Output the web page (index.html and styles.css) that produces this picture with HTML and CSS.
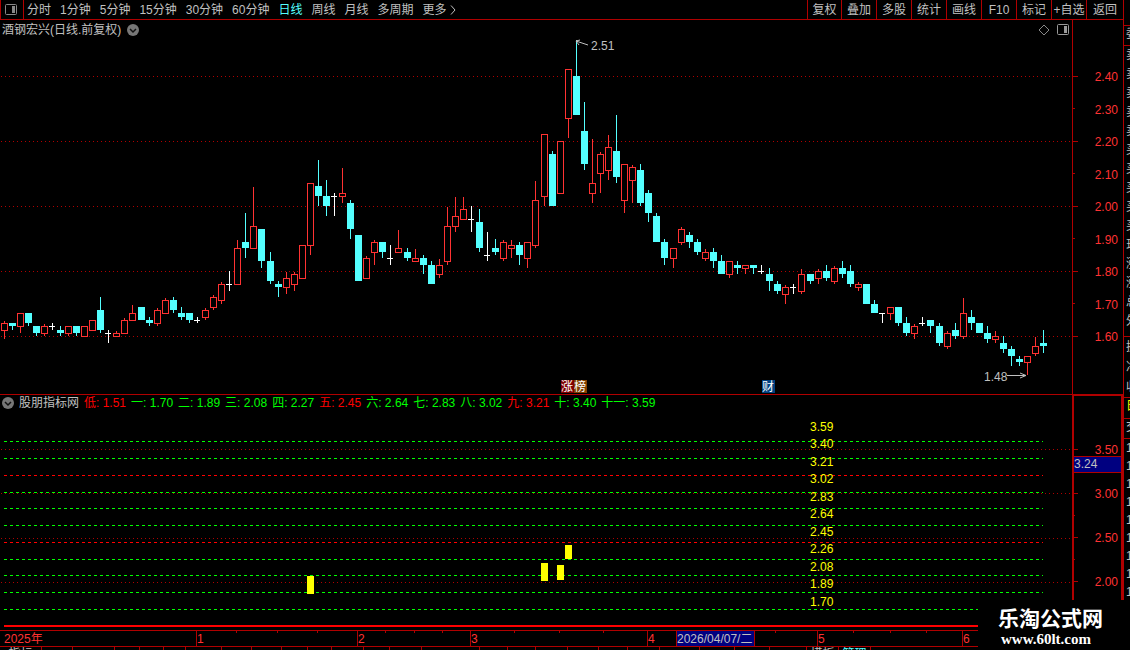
FILE: index.html
```html
<!DOCTYPE html>
<html lang="zh-CN">
<head>
    <meta charset="UTF-8">
    <meta name="viewport" content="width=device-width, initial-scale=1.0">
    <title>酒钢宏兴 日线</title>
    <link rel="stylesheet" href="styles.css">
</head>
<body>
    <div class="terminal">
        <header class="toolbar">
            <button class="layout-btn" aria-label="布局">
                <svg width="14" height="12" viewBox="0 0 14 12"><rect x="1.5" y="0.5" width="11" height="10" rx="1" fill="none" stroke="#888"/><rect x="8" y="2" width="3" height="7" fill="#888"/></svg>
            </button>
            <nav class="periods">
                <button>分时</button>
                <button>1分钟</button>
                <button>5分钟</button>
                <button>15分钟</button>
                <button>30分钟</button>
                <button>60分钟</button>
                <button class="active">日线</button>
                <button>周线</button>
                <button>月线</button>
                <button>多周期</button>
                <button>更多<svg width="8" height="10" viewBox="0 0 8 10"><path d="M2 0.5 L6 5 L2 9.5" fill="none" stroke="#c0c0c0"/></svg></button>
            </nav>
            <div class="tools">
                <button>复权</button>
                <button>叠加</button>
                <button>多股</button>
                <button>统计</button>
                <button>画线</button>
                <button>F10</button>
                <button>标记</button>
                <button>+自选</button>
                <button>返回</button>
            </div>
        </header>

        <section class="panel main-panel">
            <div class="plot">
                <svg id="candles"></svg>
                <div class="plot-head">
                    <span>酒钢宏兴(日线.前复权)</span>
                    <button class="round" aria-label="展开"><svg width="12" height="12" viewBox="0 0 12 12"><circle cx="6" cy="6" r="6" fill="#777"/><path d="M3 5 L6 8 L9 5" fill="none" stroke="#111" stroke-width="1.5"/></svg></button>
                    <span class="corner">
                        <svg width="12" height="12" viewBox="0 0 12 12"><path d="M6 1 L11 6 L6 11 L1 6 Z" fill="none" stroke="#888"/></svg>
                        <svg width="14" height="12" viewBox="0 0 14 12"><rect x="1.5" y="0.5" width="11" height="10" rx="1" fill="none" stroke="#999"/><rect x="8" y="2" width="3" height="7" fill="#999"/></svg>
                    </span>
                </div>
            </div>
            <svg id="priceAxis" class="axis"></svg>
        </section>

        <section class="panel sub-panel">
            <div class="plot">
                <svg id="levels"></svg>
                <div class="plot-head indicator">
                    <button class="round" aria-label="展开"><svg width="12" height="12" viewBox="0 0 12 12"><circle cx="6" cy="6" r="6" fill="#777"/><path d="M3 5 L6 8 L9 5" fill="none" stroke="#111" stroke-width="1.5"/></svg></button>
                    <span>股朋指标网</span>
                    <span class="red">低: 1.51</span>
                    <span class="green">一: 1.70</span>
                    <span class="green">二: 1.89</span>
                    <span class="green">三: 2.08</span>
                    <span class="green">四: 2.27</span>
                    <span class="red">五: 2.45</span>
                    <span class="green">六: 2.64</span>
                    <span class="green">七: 2.83</span>
                    <span class="green">八: 3.02</span>
                    <span class="red">九: 3.21</span>
                    <span class="green">十: 3.40</span>
                    <span class="green">十一: 3.59</span>
                </div>
            </div>
            <svg id="levelAxis" class="axis axis-active"></svg>
        </section>

        <svg id="timeAxis" class="time-axis"></svg>
        <div id="tabs" class="tabs"></div>
    </div>

    <aside class="side">
        <div class="side-gap"></div>
        <div class="side-head">委</div>
        <div class="side-quotes">
            <span>卖</span><span>卖</span><span>卖</span><span>卖</span><span>卖</span>
            <span>买</span><span>买</span><span>买</span><span>买</span><span>买</span>
            <span>现</span><span>涨</span><span>涨</span><span>总</span><span>外</span>
        </div>
        <div class="side-info"><span>换</span><span>净</span><span>收</span></div>
        <div class="side-tab">日</div>
        <div class="side-head">交</div>
        <div class="side-ticks">
            <span>1</span><span>1</span><span>1</span><span>1</span><span>1</span><span>1</span><span>1</span><span>1</span><span>1</span>
        </div>
    </aside>

    <div class="brand">
        <strong>乐淘公式网</strong>
        <span>www.60lt.com</span>
    </div>

    <script src="chart.js"></script>
</body>
</html>
```

FILE: styles.css
```css
* {
    box-sizing: border-box;
}

body {
    margin: 0;
    height: 100vh;
    display: flex;
    overflow: hidden;
    position: relative;
    background-color: #000;
    color: #c0c0c0;
    font-family: "Liberation Sans", "Noto Sans CJK SC", sans-serif;
    font-size: 12px;
    line-height: 16px;
}

button {
    margin: 0;
    padding: 0;
    border: none;
    background: none;
    color: inherit;
    font: inherit;
    white-space: nowrap;
    cursor: pointer;
}

svg {
    display: block;
    flex-shrink: 0;
}

.terminal {
    flex: 1;
    min-width: 0;
    display: grid;
    grid-template-columns: minmax(0, 1fr);
    grid-template-rows: 20px minmax(0, 375fr) minmax(0, 235fr) 17px 3px;
}

/* toolbar */
.toolbar {
    display: flex;
    border-bottom: 1px solid #b00000;
    border-left: 1px solid #b00000;
}

.layout-btn {
    width: 23px;
    padding-right: 2px;
    display: flex;
    align-items: center;
    justify-content: center;
    border-right: 1px solid #b00000;
}

.periods {
    flex: 1;
    display: flex;
    gap: 9px;
    padding-left: 3px;
}

.periods button {
    display: flex;
    align-items: center;
}

.periods svg {
    margin-left: 2px;
}

.periods .active {
    color: #54ffff;
}

.tools {
    display: flex;
}

.tools button {
    width: 35px;
    border-left: 1px solid #b00000;
}

.tools button:first-child {
    width: 34px;
}

.tools button:last-child {
    width: 37px;
}

/* chart panels */
.panel {
    display: flex;
    min-height: 0;
}

.main-panel {
    border-bottom: 1px solid #b00000;
}

.plot {
    flex: 1;
    min-width: 0;
    display: grid;
    grid-template-rows: minmax(0, 1fr);
    grid-template-columns: minmax(0, 1fr);
}

.plot > * {
    grid-area: 1 / 1;
}

.plot > svg {
    width: 100%;
    height: 100%;
}

.plot-head {
    align-self: start;
    display: flex;
    align-items: center;
    gap: 6px;
    height: 20px;
    padding-left: 2px;
}

.round {
    display: flex;
}

.corner {
    display: flex;
    gap: 6px;
    margin-left: auto;
    padding-right: 2px;
}

.indicator {
    gap: 5px;
    height: 16px;
}

.indicator .red {
    color: #f00;
}

.indicator .green {
    color: #0f0;
}

.axis {
    width: 51px;
    height: 100%;
    border-left: 1px solid #b00000;
}

.axis-active {
    border: 2px solid #b00000;
    border-top-width: 1px;
    border-bottom: none;
}

.time-axis {
    width: 100%;
    height: 17px;
    border-top: 1px solid #b00000;
    border-bottom: 1px solid #b00000;
}

.tabs {
    display: flex;
    overflow: hidden;
    line-height: 12px;
}

.tabs button {
    height: 14px;
    overflow: hidden;
    border-right: 1px solid #b00000;
}

.tabs .active {
    color: #54ffff;
}

/* chart drawing */
text {
    font-size: 12px;
    fill: #ff3232;
}

.up {
    fill: #000;
    stroke: #ff3232;
}

.up-wick {
    fill: #ff3232;
}

.down {
    fill: #54ffff;
}

.flat {
    fill: #fff;
}

.grid {
    stroke: #b00000;
    stroke-dasharray: 1 3;
}

.line-green {
    stroke: #0f0;
    stroke-dasharray: 3 3;
}

.line-red {
    stroke: #f00;
    stroke-dasharray: 3 3;
}

.tick {
    fill: #b00000;
}

.base {
    fill: #f00;
}

.signal {
    fill: #ff0;
}

.level-text {
    fill: #ff0;
}

.note {
    fill: #c0c0c0;
}

.arrow {
    fill: none;
    stroke: #c0c0c0;
}

.cursor-box {
    fill: #000080;
    stroke: #b00000;
}

.badge-text {
    fill: #fff;
}

.badge-red {
    fill: #800000;
}

.badge-brown {
    fill: #804000;
}

.badge-blue {
    fill: #004080;
}

/* right quote strip, only its edge is open */
.side {
    width: 7px;
    overflow: hidden;
    border-left: 1px solid #b00000;
    display: flex;
    flex-direction: column;
}

.side span {
    display: block;
    padding-left: 2px;
}

.side-gap {
    height: 25px;
}

.side-head {
    height: 20px;
    padding-left: 2px;
    border-top: 1px solid #b00000;
}

.side-quotes {
    height: 291px;
    border-top: 1px solid #b00000;
    line-height: 19px;
}

.side-info {
    height: 61px;
    border-top: 1px solid #b00000;
    line-height: 20px;
}

.side-tab {
    height: 21px;
    padding-left: 2px;
    border-top: 1px solid #b00000;
    color: #ff0;
}

.side-ticks {
    border-top: 1px solid #b00000;
    line-height: 18px;
}

/* site mark in the corner */
.brand {
    position: absolute;
    right: 0;
    bottom: 0;
    width: 152px;
    height: 50px;
    padding: 6px 0 0 20px;
    background-color: #000;
    color: #fff;
}

.brand strong {
    display: block;
    font-size: 21px;
    line-height: 25px;
}

.brand span {
    display: block;
    padding-left: 3px;
    font-family: "Liberation Serif", serif;
    font-size: 15px;
    font-weight: bold;
    line-height: 16px;
}
```

FILE: chart.js
```js
// [type, high, top, bottom, low], u = up, d = down, n = no change
const bars = [
    ['u',321,323,331,339], ['d',323,323,326,330], ['u',313,313,327,333], ['d',313,313,323,326],
    ['d',326,326,333,336], ['u',324,326,334,336], ['n',323,326,327,330], ['d',326,330,333,336],
    ['u',326,326,334,336], ['d',326,326,333,336], ['u',326,326,337,337], ['u',320,320,331,331],
    ['d',297,310,330,333], ['n',330,333,334,343], ['u',331,333,337,337], ['u',318,320,334,334],
    ['u',305,313,321,321], ['d',307,307,320,320], ['d',317,320,323,326], ['u',308,310,324,326],
    ['u',298,300,314,314], ['d',297,300,310,313], ['d',307,313,317,320], ['d',313,313,320,323],
    ['n',317,320,321,323], ['u',308,310,318,320], ['u',295,297,308,310], ['u',282,284,301,304],
    ['n',271,284,285,291], ['u',240,248,285,285], ['d',213,242,248,258], ['u',187,226,249,249],
    ['d',229,229,261,268], ['d',252,261,281,284], ['d',281,284,287,297], ['u',272,278,288,294],
    ['u',272,274,285,291], ['u',245,245,279,279], ['u',183,183,246,255], ['d',160,186,196,206],
    ['d',180,196,206,216], ['n',193,196,197,216], ['u',168,193,197,203], ['d',200,203,229,239],
    ['d',235,235,281,281], ['u',256,258,279,279], ['u',240,242,253,265], ['d',242,242,252,258],
    ['n',245,258,259,265], ['u',230,248,253,253], ['d',248,252,258,261], ['u',249,258,262,262],
    ['d',255,258,265,274], ['d',261,265,284,284], ['u',259,265,275,278], ['u',207,226,262,265],
    ['u',197,216,227,232], ['u',197,209,220,220], ['n',206,219,220,232], ['d',209,222,248,252],
    ['n',232,255,256,261], ['d',239,248,252,255], ['u',240,242,259,261], ['u',240,245,249,258],
    ['d',242,245,255,265], ['u',242,242,259,268], ['u',181,200,246,248], ['u',134,134,197,206],
    ['d',151,154,206,206], ['u',141,141,194,194], ['u',69,69,119,138], ['d',40,76,115,115],
    ['d',102,131,164,170], ['u',139,183,194,203], ['u',152,154,174,193], ['u',135,147,171,180],
    ['d',115,151,177,183], ['u',164,164,201,213], ['u',165,167,181,203], ['d',164,170,203,206],
    ['d',190,193,213,222], ['d',213,216,242,242], ['d',239,242,258,265], ['u',248,248,259,268],
    ['u',227,229,243,245], ['d',232,235,242,248], ['d',239,242,252,255], ['u',249,252,259,261],
    ['d',248,252,261,268], ['d',255,261,274,274], ['u',261,261,275,278], ['d',261,265,268,274],
    ['u',265,265,269,274], ['d',265,265,268,274], ['n',265,271,272,274], ['d',268,274,281,291],
    ['d',281,284,291,294], ['u',285,287,295,304], ['n',284,287,288,294], ['u',269,274,292,294],
    ['d',274,274,281,284], ['u',269,271,279,284], ['d',265,271,278,281], ['u',266,268,282,284],
    ['d',261,268,274,278], ['d',265,271,284,287], ['u',282,284,288,291], ['d',284,284,304,304],
    ['d',300,304,313,313], ['n',313,313,314,323], ['u',307,307,314,320], ['d',307,307,323,326],
    ['d',317,323,333,336], ['u',324,326,334,339], ['n',317,323,324,326], ['d',320,320,326,333],
    ['d',323,326,343,346], ['u',331,333,347,349], ['d',323,330,336,339], ['u',298,313,337,339],
    ['d',310,317,323,330], ['d',323,323,333,333], ['d',326,333,339,343], ['u',331,336,340,343],
    ['d',336,343,349,353], ['d',346,349,356,366], ['d',356,359,362,366], ['u',356,356,363,375],
    ['u',337,346,354,356], ['d',330,343,346,353]
];

const SLOTS = 133;
const MAIN_TOP = 20, MAIN_H = 374;
const SUB_TOP = 395, SUB_H = 235;

const levelLines = [
    [441, 'green'], [458, 'green'], [475, 'red'], [492, 'green'], [508, 'green'], [525, 'green'],
    [542, 'red'], [559, 'green'], [575, 'green'], [592, 'green'], [609, 'green']
];
const levelLabels = ['3.59', '3.40', '3.21', '3.02', '2.83', '2.64', '2.45', '2.26', '2.08', '1.89', '1.70'];
const signals = [[38, 576, 594], [67, 563, 581], [69, 565, 580], [70, 545, 559]];

function add(svg, tag, attrs, text) {
    const node = document.createElementNS('http://www.w3.org/2000/svg', tag);
    for (const key in attrs) node.setAttribute(key, attrs[key]);
    if (text) node.textContent = text;
    svg.appendChild(node);
    return node;
}

function rect(svg, cls, x, y, width, height) {
    add(svg, 'rect', { class: cls, x, y, width, height });
}

function label(svg, x, y, text, cls = '', anchor = 'start') {
    add(svg, 'text', { class: cls, x, y: y + 4, 'text-anchor': anchor }, text);
}

function hline(svg, cls, x1, x2, y) {
    add(svg, 'line', { class: cls, x1, x2, y1: y + 0.5, y2: y + 0.5 });
}

function clear(id) {
    const svg = document.getElementById(id);
    svg.innerHTML = '';
    return svg;
}

const barX = (i, width) => 4 + Math.floor(i * width / SLOTS + 0.025);

function drawCandles() {
    const svg = clear('candles');
    const w = svg.clientWidth;
    const k = svg.clientHeight / MAIN_H;
    const Y = v => Math.round((v - MAIN_TOP) * k);

    [76, 141, 206, 271, 336].forEach(v => hline(svg, 'grid', 1, w, Y(v)));

    bars.forEach(([type, high, top, bottom, low], i) => {
        const x = barX(i, w);
        const h = Y(bottom) - Y(top);
        const wick = { u: 'up-wick', d: 'down', n: 'flat' }[type];
        rect(svg, wick, x, Y(high), 1, Y(low) - Y(high));
        if (type === 'u') rect(svg, 'up', x - 2.5, Y(top) + 0.5, 6, h - 1);
        if (type === 'd') rect(svg, 'down', x - 3, Y(top), 7, h);
        if (type === 'n') rect(svg, 'flat', x - 3, Y(top), 6, 1);
    });

    const peak = barX(71, w);
    add(svg, 'path', { class: 'arrow', d: `M${peak + 12} ${Y(45)} L${peak} ${Y(41)} M${peak + 4} ${Y(40)} L${peak} ${Y(41)} L${peak + 3} ${Y(45)}` });
    label(svg, peak + 15, Y(46), '2.51', 'note');

    const bottom = barX(127, w);
    add(svg, 'path', { class: 'arrow', d: `M${bottom - 20} ${Y(375) + 0.5} H${bottom - 1} M${bottom - 7} ${Y(373)} L${bottom - 1} ${Y(375) + 0.5} L${bottom - 7} ${Y(378)}` });
    label(svg, bottom - 43, Y(377), '1.48', 'note');

    const badge = (x, text, cls) => {
        rect(svg, cls, x, Y(380), 13, 13);
        label(svg, x, Y(387), text, 'badge-text');
    };
    badge(barX(69, w) + 1, '涨', 'badge-red');
    badge(barX(71, w) - 2, '榜', 'badge-brown');
    badge(barX(94, w) + 1, '财', 'badge-blue');
}

function drawPriceAxis() {
    const svg = clear('priceAxis');
    const k = svg.clientHeight / MAIN_H;
    const Y = v => Math.round((v - MAIN_TOP) * k);
    for (let i = 0; i < 9; i++) {
        const y = 76 + i * 32.5;
        rect(svg, 'tick', 0, Math.floor((y - MAIN_TOP) * k), i % 2 ? 2 : 5, 1);
        label(svg, 45, Y(y) + 1, (2.4 - i / 10).toFixed(2), '', 'end');
    }
}

function drawLevels() {
    const svg = clear('levels');
    const w = svg.clientWidth;
    const k = svg.clientHeight / SUB_H;
    const Y = v => Math.round((v - SUB_TOP) * k);
    const end = barX(129, w);

    [449, 493, 538, 582].forEach(v => hline(svg, 'grid', 1, w, Y(v)));
    levelLines.forEach(([v, color]) => hline(svg, 'line-' + color, 4, end, Y(v)));
    signals.forEach(([i, top, bottom]) => rect(svg, 'signal', barX(i, w) - 3, Y(top), 7, Y(bottom) - Y(top)));
    levelLabels.forEach((text, i) => label(svg, barX(100, w), Y(Math.floor(427 + i * 17.5)), text, 'level-text'));
    rect(svg, 'base', 4, Y(625), w - 4, 2);
}

function drawLevelAxis() {
    const svg = clear('levelAxis');
    const k = svg.clientHeight / SUB_H;
    // the frame takes one row at the top
    const Y = v => Math.round((v - SUB_TOP) * k) - 1;
    [449, 493, 538, 582].forEach((v, i) => {
        rect(svg, 'tick', 0, Y(v), 4, 1);
        label(svg, 44, Y(v) + 1, (3.5 - i / 2).toFixed(2), '', 'end');
    });
    [516, 560].forEach(v => rect(svg, 'tick', 0, Y(v), 1, 1));
    rect(svg, 'cursor-box', -1, Y(456) + 0.5, 50, 16);
    label(svg, 0, Y(464), '3.24', 'note');
}

function drawTimeAxis() {
    const svg = clear('timeAxis');
    const k = svg.clientWidth / 1123;
    const X = v => Math.round(v * k);
    label(svg, X(4), 8, '2025年');
    [[196, '1'], [357, '2'], [470, '3'], [647, '4'], [817, '5'], [962, '6']].forEach(([x, month]) => {
        rect(svg, 'tick', X(x), 0, 1, 15);
        label(svg, X(x) + 1, 8, month);
    });
    [236, 277, 317, 385, 414, 442, 514, 559, 603, 775, 853, 890, 926].forEach(x => rect(svg, 'tick', X(x), 0, 1, 2));
    add(svg, 'rect', { class: 'cursor-box', x: X(676) + 0.5, y: -0.5, width: 78, height: 16 });
    label(svg, X(677), 8, '2026/04/07/二', 'note');
}

function drawTabs() {
    const box = document.getElementById('tabs');
    const edges = [0, 42, 73, 115, 140, 164, 186, 222, 252, 282, 308, 332, 364, 390, 422, 480, 508, 536, 568, 599, 628, 660, 700, 735, 770, 807, 839, 871];
    const names = { 0: '指标', 25: '模板', 26: '管理' };
    box.innerHTML = '';
    for (let i = 0; i < edges.length - 1; i++) {
        const tab = document.createElement('button');
        tab.style.width = (edges[i + 1] - edges[i]) / 11.23 + '%';
        tab.textContent = names[i] || '';
        if (i === 26) tab.className = 'active';
        box.appendChild(tab);
    }
}

function draw() {
    drawCandles();
    drawPriceAxis();
    drawLevels();
    drawLevelAxis();
    drawTimeAxis();
}

drawTabs();
draw();
window.addEventListener('resize', draw);
```
